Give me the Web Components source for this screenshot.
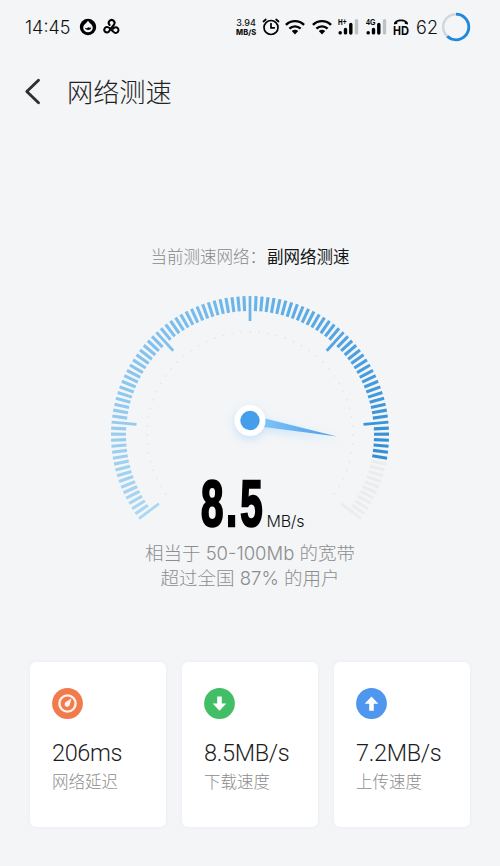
<!DOCTYPE html>
<html lang="zh-CN">
<head>
<meta charset="utf-8">
<title>网络测速</title>
<style>
html,body{margin:0;height:100%}
body{background:#f3f5f7;font-family:Inter,"Noto Sans CJK SC",sans-serif;font-weight:300;color:#1c1c1c}
</style>
</head>
<body>
<speed-app></speed-app>
<script>
class Base extends HTMLElement{
  connectedCallback(){
    if(this.shadowRoot)return;
    this.attachShadow({mode:'open'}).innerHTML=this.render();
  }
}

customElements.define('status-icon',class extends Base{
  render(){
    const icons={
      drop:[18,18,'<circle cx="9" cy="9" r="8.2" fill="#000"/><path d="M9 2.8C7.7 5 4.2 7 4.2 9.7a4.8 4.6 0 0 0 9.6 0C13.8 7 10.3 5 9 2.8Z" fill="#f3f5f7"/><path d="M5.6 9.6q1.5 1.1 2.6.3 1.6-1.4 2.5-.2l1.7-.2a3.5 3.3 0 0 1-6.8.1Z" fill="#000"/>'],
      knot:[18,16,'<g fill="none" stroke="#000" stroke-width="2" stroke-linecap="round"><path d="M6.6 6A2.9 2.9 0 1 1 11 5.6C9.6 7.6 7.6 9 6.5 11.7a2.7 2.7 0 1 1-1.7-3.6c1.7.5 2.5 2 3.9 3.2l2.6 2.2a2.8 2.8 0 1 0 1-5.2q-1.4.3-2.2 1.5"/></g>'],
      alarm:[18,18,'<g fill="none" stroke="#000" stroke-width="1.7" stroke-linecap="round"><circle cx="9" cy="9.5" r="7"/><path d="M9 5.5v4.3h3.3M1.5 3.5l2.3-2M16.5 3.5l-2.3-2"/></g>'],
      wifi:[20,16,'<g fill="none" stroke="#000" stroke-width="2.4"><path d="M.9 5.9C6 .8 14 .8 19.1 5.9"/><path d="M4.4 9.7c3.2-3.1 8-3.1 11.2 0"/></g><path d="M6.8 12q3.2-2.3 6.4 0L10 15.6Z"/>'],
      hd:[18,20,'<path d="M2 7.4C1.2 1 16.8 1 16 7.4l-3.2-.6-.2-2c-2-.7-5.2-.7-7.2 0l-.2 2Z" fill="#000"/><text x="1" y="17.7" textLength="16" lengthAdjust="spacingAndGlyphs" font-family="Liberation Sans" font-size="12" font-weight="700">HD</text>']
    };
    const t=this.getAttribute('name');
    let d=icons[t];
    if(t==='signal'){
      const l=this.getAttribute('label');
      d=[21,18,`<text x="0" y="7" font-family="Liberation Sans" font-size="8.5" font-weight="700" textLength="${l==='H+'?8.5:9.5}" lengthAdjust="spacingAndGlyphs">${l}</text><g stroke-width="3.4" stroke-linecap="round" stroke="#000"><path d="M2.2 14.6v.3M7.5 11.5v3.4M12.8 6.5v8.6"/><path d="M18.5 2.7v12.2" stroke="#bfc1c3"/></g>`];
    }
    return `<style>:host{display:block;flex:none}svg{display:block;overflow:visible}</style><svg width="${d[0]}" height="${d[1]}" viewBox="0 0 ${d[0]} ${d[1]}">${d[2]}</svg>`;
  }
});

customElements.define('battery-ring',class extends Base{
  render(){return `<style>:host{display:block;flex:none}svg{display:block}</style>
  <svg width="30" height="30"><circle cx="15" cy="15" r="12.8" fill="none" stroke="#d4d6da" stroke-width="2.6"/>
  <circle cx="15" cy="15" r="12.8" fill="none" stroke="#2088dd" stroke-width="2.8" pathLength="100" stroke-dasharray="62 38" transform="rotate(-90 15 15)"/></svg>`}
});

customElements.define('status-bar',class extends Base{
  render(){return `<style>
  :host{display:flex;height:54px;padding:0 29px 0 25px;align-items:center;box-sizing:border-box;color:#111}
  .time{font:300 18px Inter,sans-serif;width:54px;letter-spacing:0}
  .rate{display:grid;width:22px;font:500 9px/11px Inter,sans-serif;text-align:center}
  .rate b{font:800 7.5px/9px Inter,sans-serif}
  .pct{font:300 18px Inter,sans-serif}
  .l,.r{display:flex;align-items:center}.l{flex:1}
  </style>
  <div class="l"><span class="time">14:45</span><status-icon name="drop"></status-icon><status-icon name="knot" style="margin-left:6px"></status-icon></div>
  <div class="r"><span class="rate"><span>3.94</span><b>MB/S</b></span>
  <status-icon name="alarm" style="margin-left:5px"></status-icon>
  <status-icon name="wifi" style="margin-left:5px"></status-icon>
  <status-icon name="wifi" style="margin-left:7px"></status-icon>
  <status-icon name="signal" label="H+" style="margin-left:6px"></status-icon>
  <status-icon name="signal" label="4G" style="margin-left:7px"></status-icon>
  <status-icon name="hd" style="margin-left:5px"></status-icon>
  <span class="pct" style="margin-left:6px">62</span>
  <battery-ring style="margin-left:3px"></battery-ring></div>`}
});

customElements.define('title-bar',class extends Base{
  render(){return `<style>
  :host{display:flex;align-items:center;height:74px;padding-left:24px;box-sizing:border-box}
  svg{display:block;margin-right:25px}
  h1{margin:-1px 0 0;font:300 26.2px/40px "Noto Sans CJK SC",sans-serif;color:#222}
  </style><svg width="18" height="28"><path d="M14.5 3.2 2.8 14.5l11.7 11.3" fill="none" stroke="#303030" stroke-width="2.9" stroke-linecap="round" stroke-linejoin="round"/></svg><h1><slot></slot></h1>`}
});

customElements.define('speed-gauge',class extends Base{
  render(){
    const step=127/51, mix=(a,b,t)=>a.map((v,i)=>Math.round(v+(b[i]-v)*t));
    let s='';
    for(let i=-51;i<=51;i++){
      const on=i<=40, major=i%17===0;
      const t=(i+51)/91;
      const c=on?`rgb(${t<.55?mix([170,215,243],[107,181,234],t/.55):mix([107,181,234],[50,142,215],(t-.55)/.45)})`:'#ebeded';
      s+=`<path d="M150 6v${major?25:15}" stroke="${c}" stroke-width="${major?2.7:3.1}" transform="rotate(${i*step} 150 145)"/>`;
    }
    for(let i=-25;i<=25;i++) s+=`<circle cx="150" cy="42" r=".9" fill="#e5e8ea" transform="rotate(${i*5} 150 145)"/>`;
    return `<style>:host{display:block;width:300px;height:245px}svg{display:block;overflow:visible}</style>
    <svg width="300" height="245" viewBox="0 0 300 245">
    <defs><linearGradient id="n"><stop stop-color="#7cc3fa"/><stop offset="1" stop-color="#4a9be6"/></linearGradient>
    <filter id="f" x="-50%" y="-80%" width="200%" height="300%"><feDropShadow dx="0" dy="3" stdDeviation="4" flood-color="#5eb0f5" flood-opacity=".3"/></filter></defs>
    ${s}
    <g filter="url(#f)"><path d="M164 128.2 237 146.5 164 137Z" fill="url(#n)"/><circle cx="150" cy="130.5" r="15.5" fill="#fff"/></g>
    <circle cx="150" cy="130.5" r="9.7" fill="#459eea"/>
    <g transform="translate(101.5 235.6) scale(.62 1)"><text font-family="Liberation Sans" font-weight="700" font-size="65" fill="#000" stroke="#000" stroke-width="2.4" stroke-linejoin="miter"><tspan x="-1">8</tspan><tspan x="39.5">.</tspan><tspan x="62.5">5</tspan></text></g>
    <text x="166.5" y="236.5" font-family="Inter" font-weight="300" font-size="16" textLength="38" fill="#111">MB/s</text>
    </svg>`}
});

customElements.define('metric-card',class extends Base{
  render(){
    const k=this.getAttribute('kind');
    const c={delay:'#f27b4d',down:'#42bf66',up:'#4f96ee'}[k];
    const g={
      delay:'<circle cx="15.5" cy="15.5" r="8.1" fill="none" stroke="#fff3ec" stroke-width="2.4"/><path d="M19.6 10.3 17.7 17a2.6 2.6 0 1 1-3.4-3.2Z" fill="#fff3ec"/>',
      down:'<path d="M13.2 8.5h4.6v7h4.5L15.5 22.7 8.7 15.5h4.5Z" fill="#fff"/>',
      up:'<path d="M13.2 22.7h4.6v-7h4.5L15.5 8.5 8.7 15.7h4.5Z" fill="#fff"/>'}[k];
    return `<style>
    :host{display:flex;flex-direction:column;height:165px;box-sizing:border-box;padding:25.5px 0 0 22px;background:#fff;border-radius:6px;box-shadow:0 0 4px rgba(90,110,150,.06)}
    svg{display:block}
    .v{margin-top:19.5px;font:300 23.5px/30px Roboto,sans-serif;letter-spacing:-.35px;color:#1c1c1c;white-space:nowrap}
    .k{font:300 16.5px/26px "Noto Sans CJK SC",sans-serif;color:#8d8d8d}
    </style><svg width="31" height="31"><circle cx="15.5" cy="15.5" r="15.4" fill="${c}"/>${g}</svg>
    <div class="v"><slot name="value"></slot></div><div class="k"><slot></slot></div>`}
});

customElements.define('speed-app',class extends Base{
  render(){return `<style>
  :host{display:flex;flex-direction:column;height:866px;width:500px;background:#f3f5f7;overflow:hidden}
  .cap{margin-top:115px;height:26px;padding-left:150.5px;font:300 16.5px/26px "Noto Sans CJK SC",sans-serif;color:#888;white-space:pre;display:flex}
  .cap b{font-weight:400;color:#151515}
  .cap span{width:116.5px}
  speed-gauge{margin:21px auto 0}
  .sum{margin-top:6px;text-align:center;font:300 18.5px/25px Inter,"Noto Sans CJK SC",sans-serif;color:#8d8d8d}
  .cards{display:grid;grid-template-columns:repeat(3,136px);gap:16px;margin:71px 30px 0}
  </style>
  <status-bar></status-bar>
  <title-bar>网络测速</title-bar>
  <div class="cap"><span>当前测速网络：</span><b>副网络测速</b></div>
  <speed-gauge></speed-gauge>
  <div class="sum"><div>相当于 50-100Mb 的宽带</div><div>超过全国 87% 的用户</div></div>
  <div class="cards">
  <metric-card kind="delay"><span slot="value">206ms</span>网络延迟</metric-card>
  <metric-card kind="down"><span slot="value">8.5MB/s</span>下载速度</metric-card>
  <metric-card kind="up"><span slot="value">7.2MB/s</span>上传速度</metric-card>
  </div>`}
});
</script>
</body>
</html>
